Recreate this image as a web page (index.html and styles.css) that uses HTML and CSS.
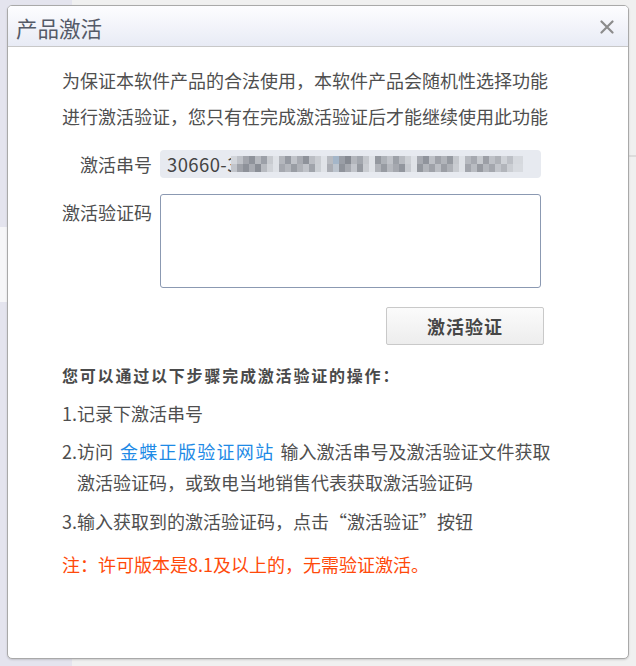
FILE: index.html
```html
<!DOCTYPE html>
<html lang="zh-CN">
<head>
<meta charset="utf-8">
<title>产品激活</title>
<link rel="stylesheet" href="styles.css">
</head>
<body>
<div class="page">
  <div class="side">
    <div class="side-top"></div>
    <div class="side-band"></div>
  </div>
  <div class="main">
    <div class="main-line"></div>
  </div>
</div>

<div class="dialog">
  <div class="dlg-head">
    <span class="dlg-title">产品激活</span>
    <svg class="dlg-close" width="14" height="14" viewBox="0 0 14 14" aria-hidden="true">
      <path d="M1.5 1.5 L12.5 12.5 M12.5 1.5 L1.5 12.5" stroke="#8c8c8c" stroke-width="2.2" stroke-linecap="round" fill="none"/>
    </svg>
  </div>
  <div class="dlg-body">
    <p class="intro">为保证本软件产品的合法使用，本软件产品会随机性选择功能<br>进行激活验证，您只有在完成激活验证后才能继续使用此功能</p>

    <div class="form-row">
      <label class="form-label">激活串号</label>
      <div class="serial"><span class="serial-text">30660-3</span><span class="mosaic"></span></div>
    </div>
    <div class="form-row top">
      <label class="form-label tall">激活验证码</label>
      <div class="codebox"></div>
    </div>
    <div class="btn-row">
      <button class="btn">激活验证</button>
    </div>

    <h3 class="steps-title">您可以通过以下步骤完成激活验证的操作：</h3>
    <div class="steps">
      <p class="step">1.记录下激活串号</p>
      <p class="step two">2.访问 <a class="link">金蝶正版验证网站</a> 输入激活串号及激活验证文件获取<br><span class="indent">激活验证码，或致电当地销售代表获取激活验证码</span></p>
      <p class="step">3.输入获取到的激活验证码，点击“激活验证”按钮</p>
      <p class="step note">注：许可版本是8.1及以上的，无需验证激活。</p>
    </div>
  </div>
</div>
</body>
</html>
```

FILE: styles.css
```css
html, body {
  margin: 0;
  padding: 0;
  width: 636px;
  height: 666px;
  overflow: hidden;
}
body {
  font-family: "Noto Sans CJK SC", "Microsoft YaHei", sans-serif;
  color: #4f4f4f;
  position: relative;
}
.page {
  display: flex;
  width: 636px;
  height: 666px;
}
.side {
  width: 72px;
  background: #e4e4ee;
  display: flex;
  flex-direction: column;
}
.side-top {
  height: 227px;
}
.side-band {
  height: 75px;
  background: #f6f6f8;
}
.main {
  flex: 1;
  background: #f0f0f0;
  display: flex;
  flex-direction: column;
}
.main-line {
  margin-top: 155px;
  height: 2px;
  background: #dcdcdc;
}

.dialog {
  position: absolute;
  left: 7px;
  top: 5px;
  width: 620px;
  height: 652px;
  background: #fff;
  border: 1px solid #a9a9a9;
  border-radius: 5px;
  box-shadow: 0 1px 2px rgba(0,0,0,0.15);
  overflow: hidden;
}
.dlg-head {
  height: 40px;
  border-bottom: 1px solid #c8c8c8;
  background: linear-gradient(#fdfdff, #e8ebf5);
  display: flex;
  align-items: center;
  justify-content: space-between;
  padding: 0 14px 0 8px;
}
.dlg-title {
  font-size: 21.5px;
  color: #545a68;
  line-height: 40px;
  margin-top: 4px;
}
.dlg-close {
  margin-top: 2px;
}
.dlg-body {
  padding: 15px 0 0 54px;
  width: 490px;
}
.intro {
  margin: 0;
  font-size: 18px;
  line-height: 36px;
  white-space: nowrap;
}
.form-row {
  display: grid;
  grid-template-columns: 90px 381px;
  column-gap: 8px;
  align-items: center;
  margin-top: 16px;
}
.form-row.top {
  align-items: start;
}
.form-label {
  font-size: 18px;
  text-align: right;
  line-height: 28px;
  white-space: nowrap;
}
.form-label.tall {
  line-height: 36px;
}
.serial {
  height: 28px;
  background: #e7eaf0;
  border-radius: 4px;
  display: flex;
  align-items: center;
  padding-left: 7px;
  font-size: 18.5px;
  letter-spacing: 0.4px;
  color: #444;
  overflow: hidden;
}
.serial-text {
  line-height: 28px;
  white-space: nowrap;
}
.mosaic {
  flex: none;
  width: 292px;
  height: 16px;
  margin-left: -7px;
  background:
    linear-gradient(90deg,
      #d3d6db 0 6px, #bfc2c8 6px 12px, #a3a6ad 12px 18px, #8f939b 18px 24px, #b7bac0 24px 30px, #9ca0a8 30px 36px, #c8cbd0 36px 42px,
      #dfe2e7 42px 48px, #b4b7bd 48px 54px, #969aa2 54px 60px, #c0c3c9 60px 66px, #a8abb2 66px 72px, #8e929a 72px 78px, #bbbec4 78px 84px, #cbced3 84px 90px,
      #e0e3e8 90px 96px, #b8bbc1 96px 102px, #a4b6c9 102px 108px, #9a9ea6 108px 114px, #868a92 114px 120px, #b3b6bc 120px 126px, #a3a7ae 126px 132px, #c5c8cd 132px 138px,
      #dfe2e7 138px 144px, #94989f 144px 150px, #aeb2b8 150px 156px, #c0c3c9 156px 162px, #9da1a8 162px 168px, #b8bbc1 168px 174px, #cdd0d5 174px 180px,
      #dfe2e7 180px 186px, #a7aab1 186px 192px, #90949c 192px 198px, #bdc0c6 198px 204px, #9fa2a9 204px 210px, #b1b4ba 210px 216px, #969aa1 216px 222px, #c5c8cd 222px 228px,
      #dfe2e7 228px 234px, #b6b9bf 234px 240px, #a6a9b0 240px 246px, #c6c9ce 246px 252px, #9c9fa6 252px 258px, #bec1c7 258px 264px, #afb2b8 264px 270px, #cfd2d7 270px 276px, #bdc0c6 276px 282px, #d6d9de 282px 292px)
      0 0 / 100% 8px no-repeat,
    linear-gradient(90deg,
      #c2c5cb 0 6px, #a0a3aa 6px 12px, #8d9199 12px 18px, #a8abb2 18px 24px, #8a8e96 24px 30px, #b8bbc1 30px 36px, #d0d3d8 36px 42px,
      #dfe2e7 42px 48px, #a5a8af 48px 54px, #b4b7bd 54px 60px, #999da4 60px 66px, #afb2b8 66px 72px, #c0c3c9 72px 78px, #a0a4ab 78px 84px, #ccd0d5 84px 90px,
      #e0e3e8 90px 96px, #aaadb4 96px 102px, #bcc4ce 102px 108px, #8f939b 108px 114px, #a6a9b0 114px 120px, #c2c5cb 120px 126px, #969aa1 126px 132px, #cacdd2 132px 138px,
      #dfe2e7 138px 144px, #b0b3b9 144px 150px, #979ba2 150px 156px, #b6b9bf 156px 162px, #a5a8af 162px 168px, #92969e 168px 174px, #c7cad0 174px 180px,
      #dfe2e7 180px 186px, #94989f 186px 192px, #b2b5bb 192px 198px, #9fa2a9 198px 204px, #bbbec4 204px 210px, #9b9ea5 210px 216px, #aeb1b7 216px 222px, #c9ccd1 222px 228px,
      #dfe2e7 228px 234px, #a2a5ac 234px 240px, #b9bcc2 240px 246px, #979aa1 246px 252px, #b4b7bd 252px 258px, #a4a7ae 258px 264px, #c2c5cb 264px 270px, #b2b5bb 270px 276px, #cbced3 276px 282px, #d8dbe0 282px 292px)
      0 8px / 100% 8px no-repeat;
}
.codebox {
  height: 92px;
  border: 1px solid #8b99b2;
  border-radius: 3px;
  background: #fff;
}
.btn-row {
  display: flex;
  justify-content: flex-end;
  width: 482px;
  margin-top: 19px;
}
.btn {
  width: 158px;
  height: 38px;
  border: 1px solid #c9c9c9;
  border-radius: 2px;
  background: linear-gradient(#fbfbfb, #ededed);
  font-family: "Noto Sans CJK SC", "Microsoft YaHei", sans-serif;
  font-size: 18px;
  font-weight: 700;
  letter-spacing: 1px;
  color: #464646;
  padding: 0;
}
.steps-title {
  margin: 18px 0 0 0;
  font-size: 16px;
  line-height: 24px;
  font-weight: 700;
  letter-spacing: 1.8px;
  color: #4a4a4a;
  white-space: nowrap;
}
.steps {
  display: flex;
  flex-direction: column;
  gap: 7px;
  margin-top: 10px;
}
.step {
  margin: 0;
  font-size: 18px;
  line-height: 32px;
  white-space: nowrap;
}
.step.two {
  line-height: 31px;
}
.indent {
  padding-left: 15px;
}
.link {
  color: #1e8ae6;
  text-decoration: none;
  letter-spacing: 1.3px;
  margin: 0 2px 0 3px;
}
.note {
  color: #ff4a0a;
  margin-top: 4px;
}
```
